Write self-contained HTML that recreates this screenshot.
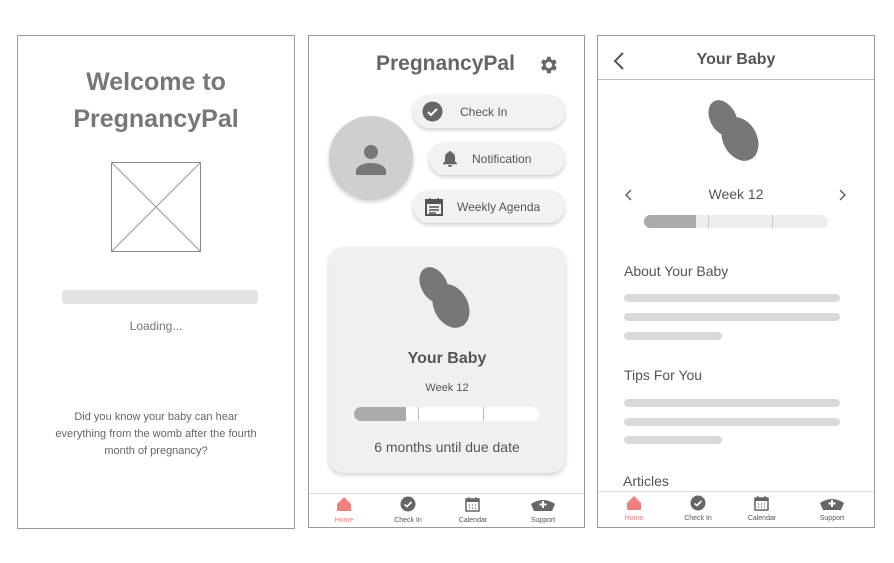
<!DOCTYPE html>
<html><head><style>
body{margin:0;width:894px;height:563px;background:#fff;position:relative;font-family:"Liberation Sans",sans-serif;overflow:hidden;color:#666}
.f{position:absolute;border:1px solid #999;background:#fff;box-sizing:border-box}
.a{position:absolute}
.t{position:absolute;text-align:center;white-space:nowrap}
.pill{position:absolute;background:#f2f2f2;border-radius:18px;box-shadow:0 2px 4px rgba(0,0,0,.2);font-size:12px;color:#555}
.bar{position:absolute;background:#d9d9d9;border-radius:4px;height:8px}
.nav{position:absolute;font-size:7px;color:#555;text-align:center;width:50px}
</style></head><body>
<div class="f" style="left:17px;top:35px;width:278px;height:494px">
 <div class="t" style="left:0;width:276px;top:28px;font-size:25px;font-weight:bold;color:#777;line-height:37px">Welcome to<br>PregnancyPal</div>
 <svg class="a" style="left:93px;top:126px" width="91" height="91"><rect x="0.5" y="0.5" width="89" height="89" fill="none" stroke="#888"/><path d="M0 0L90 90M90 0L0 90" stroke="#999"/></svg>
 <div class="a" style="left:44px;top:254px;width:196px;height:14px;background:#e3e3e3;border-radius:3px"></div>
 <div class="t" style="left:0;width:276px;top:283px;font-size:12px;color:#777">Loading...</div>
 <div class="t" style="left:0;width:276px;top:373px;font-size:11px;color:#666;line-height:17px">Did you know your baby can hear<br>everything from the womb after the fourth<br>month of pregnancy?</div>
</div>
<div class="f" style="left:308px;top:35px;width:277px;height:493px">
 <div class="t" style="left:67px;top:16px;font-size:21px;font-weight:bold;color:#666">PregnancyPal</div>
 <svg class="a" style="left:228px;top:18px" width="22" height="22" viewBox="0 0 24 24"><path fill="#666" d="M19.4 13a7.5 7.5 0 000-2l2.1-1.6-2-3.5-2.5 1a7 7 0 00-1.7-1L15 3h-4l-.4 2.9a7 7 0 00-1.7 1l-2.5-1-2 3.5L6.6 11a7.5 7.5 0 000 2l-2.2 1.6 2 3.5 2.5-1a7 7 0 001.7 1L11 21h4l.4-2.9a7 7 0 001.7-1l2.5 1 2-3.5zM13 15.5a3.5 3.5 0 110-7 3.5 3.5 0 010 7z"/></svg>
 <div class="a" style="left:20px;top:80px;width:84px;height:84px;border-radius:50%;background:#cfcfcf;box-shadow:0 2px 5px rgba(0,0,0,.2)"></div>
 <svg class="a" style="left:44px;top:105px" width="36" height="36" viewBox="0 0 36 36"><circle cx="18" cy="11" r="7" fill="#777"/><path d="M3 34v-4c0-5 8-8 15-8s15 3 15 8v4z" fill="#777"/></svg>
 <div class="pill" style="left:104px;top:59px;width:152px;height:33px"><svg class="a" style="left:9px;top:6px" width="21" height="21"><circle cx="10.5" cy="10.5" r="10" fill="#666"/><path d="M6 11l3 3 6-6" stroke="#fff" stroke-width="2" fill="none"/></svg><span class="a" style="left:47px;top:10px">Check In</span></div>
 <div class="pill" style="left:120px;top:106px;width:136px;height:33px"><svg class="a" style="left:13px;top:8px" width="16" height="17" viewBox="0 0 16 17"><path d="M8 1a1.3 1.3 0 011.3 1.3c2.4.6 3.7 2.6 3.7 5v4l2 2v1H1v-1l2-2v-4c0-2.4 1.3-4.4 3.7-5A1.3 1.3 0 018 1zM6 15h4a2 2 0 01-4 0z" fill="#666"/></svg><span class="a" style="left:43px;top:10px">Notification</span></div>
 <div class="pill" style="left:104px;top:154px;width:152px;height:33px"><svg class="a" style="left:12px;top:7px" width="18" height="19" viewBox="0 0 18 19"><rect x="1" y="3" width="16" height="15" fill="none" stroke="#555" stroke-width="2"/><rect x="1" y="3" width="16" height="4" fill="#555"/><path d="M5 1v3M13 1v3M4 10h10M4 13h10M4 16h7" stroke="#555" stroke-width="1.5"/></svg><span class="a" style="left:44px;top:10px">Weekly Agenda</span></div>
 <div class="a" style="left:20px;top:211px;width:236px;height:226px;background:#f0f0f0;border-radius:14px;box-shadow:0 2px 5px rgba(0,0,0,.2)">
  <svg class="a" style="left:88px;top:17px" width="60" height="70"><g fill="#777"><ellipse cx="17" cy="21" rx="13" ry="19" transform="rotate(-28 17 21)"/><ellipse cx="34" cy="42" rx="17" ry="23" transform="rotate(-28 34 42)"/></g></svg>
  <div class="t" style="left:0;width:236px;top:103px;font-size:16px;font-weight:bold;color:#555">Your Baby</div>
  <div class="t" style="left:0;width:236px;top:135px;font-size:11px;color:#555">Week 12</div>
  <div class="a" style="left:25px;top:160px;width:185px;height:14px;background:#fff;border-radius:7px;overflow:hidden"><div class="a" style="left:0;top:0;width:52px;height:14px;background:#aaa"></div><div class="a" style="left:64px;top:0;width:1px;height:14px;background:#bbb"></div><div class="a" style="left:129px;top:0;width:1px;height:14px;background:#bbb"></div></div>
  <div class="t" style="left:0;width:236px;top:192px;font-size:14px;color:#555">6 months until due date</div>
 </div>
 <div class="a" style="left:0;top:457px;width:275px;height:1px;background:#ddd"></div>
 <svg class="a" style="left:27px;top:460px" width="16" height="16" viewBox="0 0 16 16"><path d="M8 1L1 8v7h14V8z" fill="#f08080"/></svg>
 <div class="nav" style="left:10px;top:481px;color:#f08080">Home</div>
 <svg class="a" style="left:91px;top:460px" width="16" height="16"><circle cx="8" cy="8" r="7.5" fill="#666"/><path d="M4.5 8.5l2.5 2 4.5-4.5" stroke="#fff" stroke-width="1.6" fill="none"/></svg>
 <div class="nav" style="left:74px;top:481px">Check In</div>
 <svg class="a" style="left:156px;top:460px" width="15" height="16"><rect x="1" y="3" width="13" height="12" fill="none" stroke="#666" stroke-width="1.5"/><rect x="1" y="3" width="13" height="3" fill="#666"/><path d="M4 1v3M11 1v3M4 9h1M7 9h1M10 9h1M4 12h1M7 12h1M10 12h1" stroke="#666" stroke-width="1.3"/></svg>
 <div class="nav" style="left:139px;top:481px">Calendar</div>
 <svg class="a" style="left:221px;top:462px" width="26" height="14" viewBox="0 0 26 14"><path d="M1 6Q13 -2 25 6L22 13H4z" fill="#666"/><path d="M13 3v7M9.5 6.5h7" stroke="#fff" stroke-width="2"/></svg>
 <div class="nav" style="left:209px;top:481px">Support</div>
</div>
<div class="f" style="left:597px;top:35px;width:278px;height:493px">
 <svg class="a" style="left:15px;top:16px" width="12" height="18"><path d="M10 1L2 9l8 8" stroke="#555" stroke-width="2" fill="none"/></svg>
 <div class="t" style="left:0;width:276px;top:15px;font-size:16px;font-weight:bold;color:#555">Your Baby</div>
 <div class="a" style="left:0;top:43px;width:276px;height:1px;background:#bbb"></div>
 <svg class="a" style="left:108px;top:61px" width="60" height="70"><g fill="#777"><ellipse cx="17" cy="21" rx="13" ry="19" transform="rotate(-28 17 21)"/><ellipse cx="34" cy="42" rx="17" ry="23" transform="rotate(-28 34 42)"/></g></svg>
 <svg class="a" style="left:27px;top:153px" width="8" height="12"><path d="M6 1L1 6l5 5" stroke="#555" stroke-width="1.3" fill="none"/></svg>
 <svg class="a" style="left:240px;top:153px" width="8" height="12"><path d="M2 1l5 5-5 5" stroke="#555" stroke-width="1.3" fill="none"/></svg>
 <div class="t" style="left:0;width:276px;top:150px;font-size:14px;color:#555">Week 12</div>
 <div class="a" style="left:46px;top:179px;width:184px;height:13px;background:#eee;border-radius:7px;overflow:hidden"><div class="a" style="left:0;top:0;width:52px;height:13px;background:#aaa"></div><div class="a" style="left:64px;top:0;width:1px;height:13px;background:#ccc"></div><div class="a" style="left:128px;top:0;width:1px;height:13px;background:#ccc"></div></div>
 <div class="a" style="left:26px;top:227px;font-size:14px;color:#555">About Your Baby</div>
 <div class="bar" style="left:26px;top:258px;width:216px"></div>
 <div class="bar" style="left:26px;top:277px;width:216px"></div>
 <div class="bar" style="left:26px;top:296px;width:98px"></div>
 <div class="a" style="left:26px;top:331px;font-size:14px;color:#555">Tips For You</div>
 <div class="bar" style="left:26px;top:363px;width:216px"></div>
 <div class="bar" style="left:26px;top:382px;width:216px"></div>
 <div class="bar" style="left:26px;top:400px;width:98px"></div>
 <div class="a" style="left:25px;top:437px;font-size:14px;color:#555">Articles</div>
 <div class="a" style="left:0;top:455px;width:276px;height:1px;background:#ddd"></div>
 <svg class="a" style="left:28px;top:459px" width="16" height="16" viewBox="0 0 16 16"><path d="M8 1L1 8v7h14V8z" fill="#f08080"/></svg>
 <div class="nav" style="left:11px;top:479px;color:#f08080">Home</div>
 <svg class="a" style="left:92px;top:459px" width="16" height="16"><circle cx="8" cy="8" r="7.5" fill="#666"/><path d="M4.5 8.5l2.5 2 4.5-4.5" stroke="#fff" stroke-width="1.6" fill="none"/></svg>
 <div class="nav" style="left:75px;top:479px">Check In</div>
 <svg class="a" style="left:156px;top:459px" width="15" height="16"><rect x="1" y="3" width="13" height="12" fill="none" stroke="#666" stroke-width="1.5"/><rect x="1" y="3" width="13" height="3" fill="#666"/><path d="M4 1v3M11 1v3M4 9h1M7 9h1M10 9h1M4 12h1M7 12h1M10 12h1" stroke="#666" stroke-width="1.3"/></svg>
 <div class="nav" style="left:139px;top:479px">Calendar</div>
 <svg class="a" style="left:221px;top:461px" width="26" height="14" viewBox="0 0 26 14"><path d="M1 6Q13 -2 25 6L22 13H4z" fill="#666"/><path d="M13 3v7M9.5 6.5h7" stroke="#fff" stroke-width="2"/></svg>
 <div class="nav" style="left:209px;top:479px">Support</div>
</div>
</body></html>
